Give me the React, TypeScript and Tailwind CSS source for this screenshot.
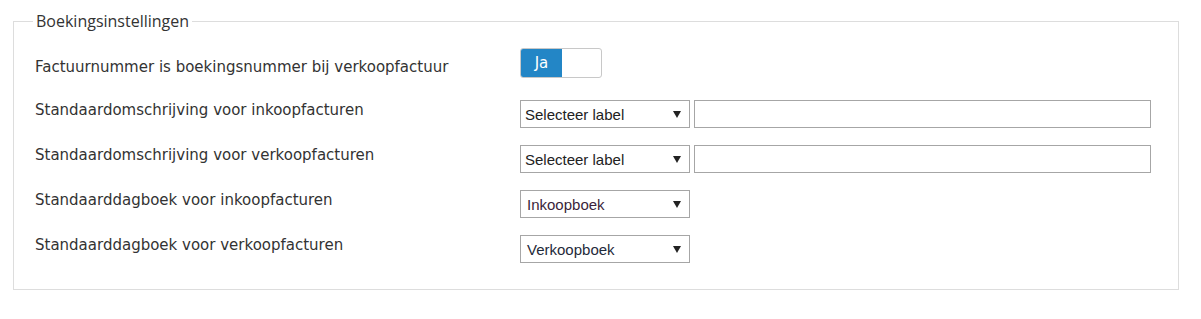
import React from "react";

function Arrow() {
  return (
    <svg width="8" height="7" viewBox="0 0 8 7" className="shrink-0">
      <path d="M0 0 H8 L4 7 Z" fill="#222" />
    </svg>
  );
}

function Select({ value, cls = "text-[#222]", pl = "pl-[4px]" }: { value: string; cls?: string; pl?: string }) {
  return (
    <div className={`flex h-[28px] w-[170px] shrink-0 items-center justify-between border border-[#a6a6a6] bg-white pr-[8px] ${pl}`}>
      <span className={`font-['Liberation_Sans',Arial,sans-serif] text-[15px] leading-none ${cls}`}>{value}</span>
      <Arrow />
    </div>
  );
}

function Label({ children, first = false }: { children: React.ReactNode; first?: boolean }) {
  return (
    <div
      className={`w-[485px] shrink-0 font-['DejaVu_Sans',Verdana,sans-serif] text-[15px] leading-[20px] text-[#333] ${
        first ? "mt-[9px]" : "mt-0"
      }`}
    >
      {children}
    </div>
  );
}

export default function App() {
  return (
    <div className="min-h-[319px] w-[1201px] bg-white pl-[13px] pt-[11px]">
      <fieldset className="w-[1166px] border border-[#dddddd] pb-[26px] pl-[21px]">
        <legend className="-ml-[2px] px-[3px] font-['Open_Sans',sans-serif] text-[16px] leading-[20px] text-[#333]">
          Boekingsinstellingen
        </legend>
        <div className="flex flex-col pt-[17px]">
          <div className="flex items-start">
            <Label first>Factuurnummer is boekingsnummer bij verkoopfactuur</Label>
            <div className="flex h-[30px] w-[82px] overflow-hidden rounded-[3px] border border-[#c8c8c8] bg-white">
              <div className="flex w-[41px] items-center justify-center bg-[#2386c6] font-['DejaVu_Sans',Verdana,sans-serif] text-[15px] text-white">
                Ja
              </div>
            </div>
          </div>

          <div className="mt-[22px] flex items-start">
            <Label>Standaardomschrijving voor inkoopfacturen</Label>
            <Select value="Selecteer label" />
            <div className="ml-[4px] h-[28px] w-[457px] border border-[#a6a6a6] bg-white" />
          </div>

          <div className="mt-[17px] flex items-start">
            <Label>Standaardomschrijving voor verkoopfacturen</Label>
            <Select value="Selecteer label" />
            <div className="ml-[4px] h-[28px] w-[457px] border border-[#a6a6a6] bg-white" />
          </div>

          <div className="mt-[17px] flex items-start">
            <Label>Standaarddagboek voor inkoopfacturen</Label>
            <Select value="Inkoopboek" cls="text-[#3a1f3a]" pl="pl-[6px]" />
          </div>

          <div className="mt-[17px] flex items-start">
            <Label>Standaarddagboek voor verkoopfacturen</Label>
            <Select value="Verkoopboek" cls="text-[#1f2a3a]" pl="pl-[6px]" />
          </div>
        </div>
      </fieldset>
    </div>
  );
}
